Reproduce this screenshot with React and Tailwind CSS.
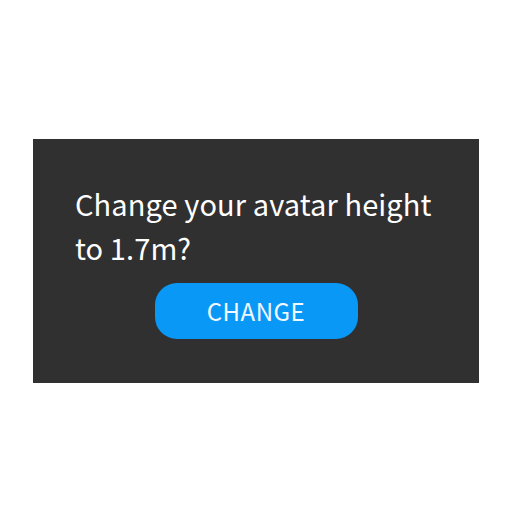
import React from "react";

export default function App() {
  return (
    <div className="w-[512px] h-[512px] bg-white pt-[139px] pl-[33px]" style={{ fontFamily: '"Noto Sans CJK JP", "Noto Sans", sans-serif' }}>
      <div className="w-[446px] h-[244px] bg-[#303030] flex flex-col">
        <p className="pl-[42px] pt-[42px] text-[29px] leading-[44px] tracking-[0.1px] text-white">
          Change your avatar height
          <br />
          to 1.7m?
        </p>
        <div className="flex justify-center mt-[14px]">
          <button className="w-[203px] h-[56px] rounded-[22px] bg-[#0a98f6] text-[#f2f8ff] text-[24px] tracking-[0.5px]">
            CHANGE
          </button>
        </div>
      </div>
    </div>
  );
}
